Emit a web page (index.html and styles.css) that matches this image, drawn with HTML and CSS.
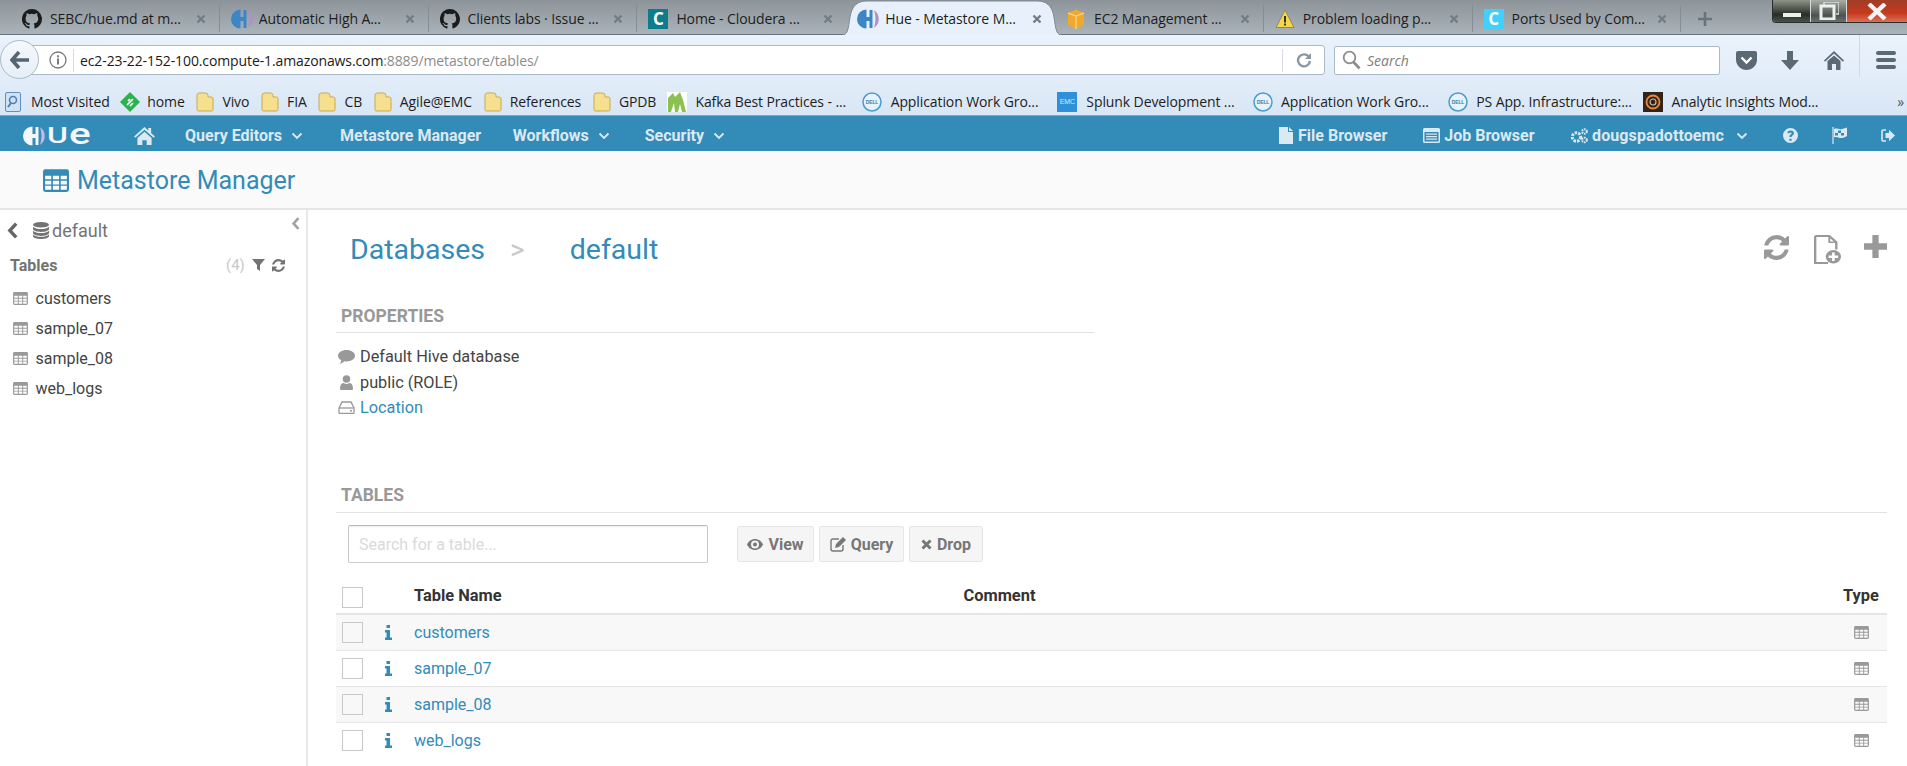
FILE: index.html
```html
<!DOCTYPE html>
<html lang="en">
<head>
<meta charset="utf-8">
<title>Hue - Metastore Manager</title>
<link rel="stylesheet" href="styles.css">
</head>
<body>
<svg class="defs" width="0" height="0" aria-hidden="true">
  <defs>
    <symbol id="i-table" viewBox="0 0 16 14"><path fill-rule="evenodd" d="M1.5 0h13A1.5 1.5 0 0 1 16 1.5v11a1.5 1.5 0 0 1-1.5 1.5h-13A1.5 1.5 0 0 1 0 12.5v-11A1.5 1.5 0 0 1 1.5 0zM1.3 4v2.3h3.8V4zM6.1 4v2.3h3.8V4zM10.9 4v2.3h3.8V4zM1.3 7.2v2.2h3.8V7.2zM6.1 7.2v2.2h3.8V7.2zM10.9 7.2v2.2h3.8V7.2zM1.3 10.3v2.4h3.8v-2.4zM6.1 10.3v2.4h3.8v-2.4zM10.9 10.3v2.4h3.8v-2.4z"/></symbol>
    <symbol id="i-refresh" viewBox="0 0 1536 1536"><path d="M1511 928q0 5-1 7-64 268-268 434.5t-478 166.5q-146 0-282.5-55t-243.5-157l-129 129q-19 19-45 19t-45-19-19-45v-448q0-26 19-45t45-19h448q26 0 45 19t19 45-19 45l-137 137q71 66 161 102t187 36q134 0 250-65t186-179q11-17 53-117 8-23 30-23h192q13 0 22.5 9.5t9.5 22.5zm25-800v448q0 26-19 45t-45 19h-448q-26 0-45-19t-19-45 19-45l138-138q-148-137-349-137-134 0-250 65t-186 179q-11 17-53 117-8 23-30 23h-199q-13 0-22.5-9.5t-9.5-22.5v-7q65-268 270-434.5t480-166.5q146 0 284 55.5t245 156.5l130-129q19-19 45-19t45 19 19 45z"/></symbol>
    <symbol id="i-chev" viewBox="0 0 12 8"><path d="M1.5 1.5L6 6l4.500-4.500" fill="none" stroke="currentColor" stroke-width="1.800"/></symbol>
    <symbol id="i-left" viewBox="0 0 11 16"><path d="M8.500 1.500L2.500 8l6 6.500" fill="none" stroke="currentColor" stroke-width="3.200"/></symbol>
    <symbol id="i-home" viewBox="0 0 22 19"><path d="M11 0l4 3.600V1h3v5.300L22 10l-1.300 1.400L11 3 1.300 11.400 0 10z"/><path d="M3.500 11.500L11 5l7.500 6.500V19h-5.200v-5H8.700v5H3.500z"/></symbol>
    <symbol id="i-hue" viewBox="0 0 22 20"><path class="hue-a" d="M9.500 0.500A9.500 9.500 0 0 0 9.500 19.500V12H12.500V19H15.500V1H12.500V8H9.500z"/><path class="hue-b" d="M17 1.300c2.900 1.400 4.800 4.800 4.800 8.700s-1.900 7.300-4.800 8.700c.9-2.500 1.400-5.500 1.400-8.700s-.5-6.200-1.400-8.700z"/></symbol>
    <symbol id="i-folder" viewBox="0 0 18 20"><path d="M1 3.500Q1 1 3.500 1h6Q12 1 12 3.500V5h3.500Q17 5 17 7v10.500q0 1.500-1.500 1.500h-13Q1 19 1 17.500z" fill="#f6e08f" stroke="#c9a94f"/></symbol>
    <symbol id="i-dell" viewBox="0 0 20 20"><circle cx="10" cy="10" r="9" fill="#e7f2fa" stroke="#4a9ccb" stroke-width="1.500"/><text x="10" y="11.800" text-anchor="middle" class="dell-text">DELL</text></symbol>
    <symbol id="i-github" viewBox="0 0 20 20"><path d="M10 0a10 10 0 0 0-3.200 19.500c.5.100.7-.2.700-.5v-1.800c-2.800.6-3.400-1.200-3.400-1.200-.4-1.100-1.100-1.500-1.100-1.500-.9-.6.100-.6.100-.6 1 .1 1.500 1 1.500 1 .9 1.500 2.300 1.100 2.900.8.100-.6.300-1.100.6-1.300-2.200-.3-4.500-1.100-4.500-4.900 0-1.100.4-2 1-2.700-.1-.3-.4-1.300.1-2.600 0 0 .8-.3 2.700 1a9.400 9.400 0 0 1 5 0c1.900-1.300 2.700-1 2.700-1 .5 1.300.2 2.300.1 2.600.6.700 1 1.600 1 2.700 0 3.800-2.300 4.600-4.500 4.900.4.300.7.900.7 1.900V19c0 .3.200.6.700.5A10 10 0 0 0 10 0z"/></symbol>
    <symbol id="i-close" viewBox="0 0 10 10"><path d="M1.500 1.500l7 7m0-7l-7 7" stroke="currentColor" stroke-width="2.400" fill="none"/></symbol>
  </defs>
</svg>

<header class="browser">
  <div class="tabbar">
    <div class="tab"><svg class="favicon fav-gh"><use href="#i-github"/></svg><span class="tab-title">SEBC/hue.md at m...</span><svg class="tab-x"><use href="#i-close"/></svg></div>
    <div class="tab"><svg class="favicon fav-hue"><use href="#i-hue"/></svg><span class="tab-title">Automatic High A...</span><svg class="tab-x"><use href="#i-close"/></svg></div>
    <div class="tab"><svg class="favicon fav-gh"><use href="#i-github"/></svg><span class="tab-title">Clients labs · Issue ...</span><svg class="tab-x"><use href="#i-close"/></svg></div>
    <div class="tab tab-noline"><span class="fav-box fav-teal">C</span><span class="tab-title">Home - Cloudera ...</span><svg class="tab-x"><use href="#i-close"/></svg></div>
    <div class="tab tab-active">
      <svg class="tab-shape" width="224" height="36" viewBox="0 0 224 36"><path d="M0 35.500C8 35.500 8 30 10 17 12 5 18 1 27 1H197c9 0 15 4 17 16 2 13 2 18.500 10 18.500z"/></svg>
      <svg class="favicon fav-hue"><use href="#i-hue"/></svg><span class="tab-title">Hue - Metastore M...</span><svg class="tab-x"><use href="#i-close"/></svg>
    </div>
    <div class="tab"><svg class="favicon" viewBox="0 0 20 20"><path d="M2 4l8-3.500L18 4v12l-8 4-8-4z" fill="#f0a92c"/><path d="M2 4l8 3 8-3M10 7v13" stroke="#fbd98f" stroke-width="1.200" fill="none"/></svg><span class="tab-title">EC2 Management ...</span><svg class="tab-x"><use href="#i-close"/></svg></div>
    <div class="tab"><svg class="favicon" viewBox="0 0 20 20"><path d="M10 1l9 17.500H1z" fill="#f5d64a" stroke="#8d8570"/><rect x="9" y="7" width="2" height="6.500" fill="#333"/><rect x="9" y="14.500" width="2" height="2" fill="#333"/></svg><span class="tab-title">Problem loading p...</span><svg class="tab-x"><use href="#i-close"/></svg></div>
    <div class="tab"><span class="fav-box fav-cyan">C</span><span class="tab-title">Ports Used by Com...</span><svg class="tab-x"><use href="#i-close"/></svg></div>
    <svg class="tab-new" viewBox="0 0 14 14"><path d="M7 0v14M0 7h14" stroke="currentColor" stroke-width="2.600"/></svg>
    <div class="winctl">
      <div class="win win-min"><span class="win-dash"></span></div>
      <div class="win win-max"><svg width="20" height="18" viewBox="0 0 20 18"><path d="M5 3V0h15v12h-3" fill="none" stroke="#d9dedd" stroke-width="1.500"/><rect x="2" y="4" width="13" height="13" fill="none" stroke="#eef0ef" stroke-width="3"/></svg></div>
      <div class="win win-close"><svg width="20" height="17" viewBox="0 0 20 17"><path d="M2 1l16 15M18 1L2 16" stroke="#f4f4f2" stroke-width="4.400"/></svg></div>
    </div>
  </div>

  <div class="toolbar">
    <div class="backbtn"><svg width="20" height="18" viewBox="0 0 20 18"><path d="M9 1L2 9l7 8M2.500 9H19" fill="none" stroke="#566572" stroke-width="3.600"/></svg></div>
    <div class="urlbar">
      <svg class="info-ic" width="18" height="18" viewBox="0 0 18 18"><circle cx="9" cy="9" r="8" fill="none" stroke="#7a7a7a" stroke-width="1.300"/><rect x="8" y="7.500" width="2" height="6" fill="#7a7a7a"/><rect x="8" y="4.300" width="2" height="2" fill="#7a7a7a"/></svg>
      <span class="url-sep"></span>
      <span class="url-text">ec2-23-22-152-100.compute-1.amazonaws.com<span class="url-dim">:8889/metastore/tables/</span></span>
      <span class="url-sep url-sep-r"></span>
      <svg class="reload" width="16" height="16" viewBox="0 0 16 16"><path d="M13 5A6 6 0 1 0 14 9" fill="none" stroke="#8a98a4" stroke-width="2.400"/><path d="M15 1v6H9z" fill="#8a98a4"/></svg>
    </div>
    <div class="searchbar">
      <svg width="19" height="20" viewBox="0 0 19 20"><circle cx="7.500" cy="7.500" r="5.800" fill="none" stroke="#8d8d8d" stroke-width="1.800"/><path d="M11.500 12l6 6.500" stroke="#8d8d8d" stroke-width="2.600"/></svg>
      <span class="search-ph">Search</span>
    </div>
    <svg class="tool tool-pocket" width="21" height="19" viewBox="0 0 21 19"><path d="M2 0h17q2 0 2 2v6.500C21 14.500 16 19 10.500 19S0 14.500 0 8.500V2q0-2 2-2z" fill="#5b6974"/><path d="M5.500 6.500l5 5 5-5" fill="none" stroke="#fff" stroke-width="2.400"/></svg>
    <svg class="tool tool-down" width="18" height="19" viewBox="0 0 18 19"><path d="M6 0h6v9h6l-9 10-9-10h6z" fill="#5b6974"/></svg>
    <svg class="tool tool-home" width="20" height="19" viewBox="0 0 20 19"><path d="M10 0l10 9.500-1 1.200L10 2.500 1 10.700 0 9.500z" fill="#5b6974"/><path d="M3.500 10L10 4.500l6.500 5.500v9H12v-6H8v6H3.500z" fill="#5b6974"/></svg>
    <span class="tool-sep"></span>
    <div class="tool-menu"><i></i><i></i><i></i></div>
  </div>

  <nav class="bookmarks">
    <a class="bm bm-first"><svg class="bm-ic" viewBox="0 0 16 20"><rect x=".5" y=".5" width="15" height="19" rx="1.500" fill="#cfe3f5" stroke="#5d8fbf"/><circle cx="8" cy="8" r="3.500" fill="none" stroke="#4d7fb3" stroke-width="1.600"/><path d="M6 11l-3 4" stroke="#4d7fb3" stroke-width="2"/></svg>Most Visited</a>
    <a class="bm"><svg class="bm-ic bm-feed" viewBox="0 0 20 20"><path d="M10 0l10 10-10 10L0 10z" fill="#2bb24c"/><path d="M7 13l6-6M8 9l2-2M10 14l3-3" stroke="#fff" stroke-width="1.700"/></svg>home</a>
    <a class="bm"><svg class="bm-ic"><use href="#i-folder"/></svg>Vivo</a>
    <a class="bm"><svg class="bm-ic"><use href="#i-folder"/></svg>FIA</a>
    <a class="bm"><svg class="bm-ic"><use href="#i-folder"/></svg>CB</a>
    <a class="bm"><svg class="bm-ic"><use href="#i-folder"/></svg>Agile@EMC</a>
    <a class="bm"><svg class="bm-ic"><use href="#i-folder"/></svg>References</a>
    <a class="bm"><svg class="bm-ic"><use href="#i-folder"/></svg>GPDB</a>
    <a class="bm bm-long"><svg class="bm-ic" viewBox="0 0 20 20"><rect width="20" height="20" fill="#fff"/><path d="M1 20V6l5-5 2 4 5-5 3 8 3 12h-4l-2-8-2 8H8l-1-9-3 9z" fill="#8cc152"/></svg>Kafka Best Practices - ...</a>
    <a class="bm bm-long"><svg class="bm-ic"><use href="#i-dell"/></svg>Application Work Gro...</a>
    <a class="bm bm-long"><span class="bm-emc">EMC</span>Splunk Development ...</a>
    <a class="bm bm-long"><svg class="bm-ic"><use href="#i-dell"/></svg>Application Work Gro...</a>
    <a class="bm bm-long"><svg class="bm-ic"><use href="#i-dell"/></svg>PS App. Infrastructure:...</a>
    <a class="bm bm-long"><svg class="bm-ic" viewBox="0 0 20 20"><rect width="20" height="20" fill="#33231a"/><circle cx="10" cy="10" r="6.500" fill="none" stroke="#e8893a" stroke-width="1.800"/><circle cx="10" cy="10" r="3" fill="none" stroke="#c9b9a0" stroke-width="1.200"/></svg>Analytic Insights Mod...</a>
    <span class="bm-more">»</span>
  </nav>
</header>

<nav class="huenav">
  <a class="logo">
    <svg class="logo-mark" viewBox="0 0 22 20"><path d="M9.500 0.500A9.500 9.500 0 0 0 9.500 19.500V12H12.500V19H15.500V1H12.500V8H9.500z" fill="#f4f7fa"/><path d="M17 1.300c2.900 1.400 4.800 4.800 4.800 8.700s-1.900 7.300-4.800 8.700c.9-2.500 1.400-5.500 1.400-8.700s-.5-6.200-1.400-8.700z" fill="#c9b8e8"/></svg>
    <span class="logo-u">U</span><span class="logo-e">e</span>
  </a>
  <svg class="nav-home"><use href="#i-home"/></svg>
  <a class="nav-item nav-query">Query Editors<svg class="nav-chev"><use href="#i-chev"/></svg></a>
  <a class="nav-item nav-meta">Metastore Manager</a>
  <a class="nav-item nav-flows">Workflows<svg class="nav-chev"><use href="#i-chev"/></svg></a>
  <a class="nav-item nav-sec">Security<svg class="nav-chev"><use href="#i-chev"/></svg></a>
  <span class="nav-spacer"></span>
  <a class="nav-item nav-file"><svg class="nav-ic" width="15" height="17" viewBox="0 0 15 17"><path d="M0 0h9v5h5v12H0zM10 0l4 4h-4z"/></svg>File Browser</a>
  <a class="nav-item nav-job"><svg class="nav-ic" width="17" height="15" viewBox="0 0 17 15"><path fill-rule="evenodd" d="M1.500 0h14A1.500 1.500 0 0 1 17 1.500v12a1.500 1.500 0 0 1-1.500 1.500h-14A1.500 1.500 0 0 1 0 13.500v-12A1.500 1.500 0 0 1 1.500 0zM1.500 4v9.500h14V4zM3 5.500h11v1.300H3zM3 8h11v1.300H3zM3 10.500h11v1.300H3z"/></svg>Job Browser</a>
  <a class="nav-item nav-user"><svg class="nav-ic" width="18" height="16" viewBox="0 0 18 16"><circle cx="6.500" cy="9" r="4.200" fill="none" stroke="currentColor" stroke-width="3" stroke-dasharray="2.400 1.100"/><circle cx="14.500" cy="3.500" r="2.300" fill="none" stroke="currentColor" stroke-width="2" stroke-dasharray="1.500 .8"/><circle cx="14.500" cy="12" r="2.300" fill="none" stroke="currentColor" stroke-width="2" stroke-dasharray="1.500 .8"/></svg><span class="nav-username">dougspadottoemc</span><svg class="nav-chev"><use href="#i-chev"/></svg></a>
  <svg class="nav-tool nav-help" width="15" height="15" viewBox="0 0 15 15"><path fill-rule="evenodd" d="M7.500 0a7.500 7.500 0 1 1 0 15 7.500 7.500 0 0 1 0-15zM6.400 10.700v2h2.200v-2zM7.600 2.500C5.900 2.500 4.700 3.300 4.300 4.800l1.800.6c.2-.7.700-1 1.400-1s1.100.3 1.100.9c0 .5-.4.800-1 1.200-.7.500-1.200 1-1.200 2v.6h2.200v-.4c0-.5.300-.7.900-1.100.8-.5 1.400-1.200 1.400-2.400 0-1.700-1.300-2.700-3.100-2.700z"/></svg>
  <svg class="nav-tool nav-flag" width="15" height="17" viewBox="0 0 15 17"><path d="M1 0v17" stroke="currentColor" stroke-width="1.200"/><path fill-rule="evenodd" d="M2 2c3-1.500 5 1 8 0 2-.5 3.500-1 5-1.500V9c-1.500 1-3.500 1.700-5 2-3 .6-5-2-8-.5zM6 3.500v2.500h3V3.500zM3 6v2.400h3V6zM9 6v2.500h3V6z"/></svg>
  <svg class="nav-tool nav-out" width="14" height="13" viewBox="0 0 14 13"><path d="M5 1H2Q1 1 1 2v9q0 1 1 1h3" fill="none" stroke="currentColor" stroke-width="1.600"/><path d="M4.500 4H8V.8l6 5.700-6 5.700V9H4.500z"/></svg>
</nav>

<div class="subheader">
  <svg class="sub-ic"><use href="#i-table"/></svg>
  <span class="sub-title">Metastore Manager</span>
</div>

<div class="main">
  <aside class="sidebar">
    <svg class="collapse"><use href="#i-left"/></svg>
    <div class="db-row">
      <svg class="db-back"><use href="#i-left"/></svg>
      <svg class="db-ic" viewBox="0 0 16 17"><ellipse cx="8" cy="2.800" rx="8" ry="2.800"/><path d="M0 4.700C1.500 6.200 4.500 7 8 7s6.500-.8 8-2.300v2.400C16 8.700 12.500 10 8 10S0 8.700 0 7.100zM0 8.700C1.500 10.200 4.500 11 8 11s6.500-.8 8-2.300v2.400C16 12.700 12.500 14 8 14s-8-1.300-8-2.900zM0 12.500C1.500 14 4.500 14.800 8 14.800s6.500-.8 8-2.300v1.800C16 15.900 12.500 17 8 17s-8-1.100-8-2.700z"/></svg>
      <span class="db-name">default</span>
    </div>
    <div class="tables-head">
      <span class="tables-label">Tables</span>
      <span class="tables-count">(4)</span>
      <svg class="tables-ic" width="13" height="12" viewBox="0 0 13 12"><path d="M0 0h13L8 6v6L5 10V6z"/></svg>
      <svg class="tables-ic" width="13" height="13"><use href="#i-refresh"/></svg>
    </div>
    <ul class="side-list">
      <li class="side-row"><svg class="side-ic"><use href="#i-table"/></svg>customers</li>
      <li class="side-row"><svg class="side-ic"><use href="#i-table"/></svg>sample_07</li>
      <li class="side-row"><svg class="side-ic"><use href="#i-table"/></svg>sample_08</li>
      <li class="side-row"><svg class="side-ic"><use href="#i-table"/></svg>web_logs</li>
    </ul>
  </aside>

  <section class="content">
    <div class="crumbs">
      <a class="crumb">Databases</a>
      <span class="crumb-sep">&gt;</span>
      <a class="crumb">default</a>
      <div class="actions">
        <svg class="act-refresh"><use href="#i-refresh"/></svg>
        <svg class="act-file" width="27" height="29" viewBox="0 0 23 28" preserveAspectRatio="none"><path d="M1 1h12l6 6v7" fill="none" stroke="currentColor" stroke-width="2"/><path d="M1 1v26h11" fill="none" stroke="currentColor" stroke-width="2"/><path d="M13 1v6h6" fill="none" stroke="currentColor" stroke-width="1.500"/><circle cx="16.500" cy="21" r="6.500"/><path d="M16.500 17v8M12.500 21h8" stroke="#fff" stroke-width="2.200"/></svg>
        <svg class="act-plus" width="23" height="23" viewBox="0 0 22 22"><path d="M8 0h6v8h8v6h-8v8H8v-8H0V8h8z"/></svg>
      </div>
    </div>

    <div class="section-title section-props">PROPERTIES</div>
    <ul class="props">
      <li class="prop"><svg class="prop-ic" width="17" height="14" viewBox="0 0 17 14"><path d="M8.500 0C13.200 0 17 2.500 17 5.700s-3.800 5.700-8.500 5.700c-.8 0-1.500-.1-2.200-.2C5 12.500 3.200 13.500 1.500 14c1-1 1.500-2.200 1.700-3.800C1.200 9.100 0 7.500 0 5.700 0 2.500 3.800 0 8.500 0z"/></svg>Default Hive database</li>
      <li class="prop"><svg class="prop-ic" width="17" height="15" viewBox="0 0 17 15"><circle cx="8.500" cy="4" r="3.800"/><path d="M3 15q-1 0-1-1.500C2 10 3.500 8 5.500 8q3 2 6 0c2 0 3.500 2 3.500 5.500q0 1.500-1 1.500z"/></svg>public (ROLE)</li>
      <li class="prop prop-link"><svg class="prop-ic" width="17" height="13" viewBox="0 0 17 13"><path d="M1 7L4 1h9l3 6v4.500q0 1-1 1H2q-1 0-1-1z" fill="none" stroke="currentColor" stroke-width="1.300"/><path d="M1 7h15" stroke="currentColor" stroke-width="1.300"/><rect x="12" y="9" width="2" height="1.500"/></svg>Location</li>
    </ul>

    <div class="section-title section-tables">TABLES</div>
    <div class="table-tools">
      <input class="table-search" type="text" placeholder="Search for a table...">
      <div class="btn-group">
        <button class="btn btn-view"><svg width="16" height="11" viewBox="0 0 16 11"><path fill-rule="evenodd" d="M8 0c3.500 0 6.500 2.300 8 5.500-1.500 3.200-4.500 5.500-8 5.500S1.500 8.700 0 5.500C1.500 2.300 4.500 0 8 0zM8 1.500a4 4 0 1 0 0 8 4 4 0 0 0 0-8zM8 3.500a2 2 0 1 1 0 4 2 2 0 0 1 0-4z"/></svg>View</button>
        <button class="btn btn-query"><svg width="16" height="15" viewBox="0 0 16 15"><path d="M9 2H3Q1 2 1 4v8q0 2 2 2h8q2 0 2-2V8" fill="none" stroke="currentColor" stroke-width="1.400"/><path d="M13 0l3 3-7 7-4 1 1-4z"/></svg>Query</button>
        <button class="btn btn-drop"><svg width="11" height="11" viewBox="0 0 11 11"><path d="M1.500 1.500l8 8m0-8l-8 8" stroke="currentColor" stroke-width="3" fill="none"/></svg>Drop</button>
      </div>
    </div>

    <table class="tbl">
      <colgroup><col class="col-check"><col class="col-info"><col class="col-name"><col class="col-comment"><col class="col-type"></colgroup>
      <thead>
        <tr><th class="cell-check"><span class="check check-head"></span></th><th></th><th>Table Name</th><th>Comment</th><th>Type</th></tr>
      </thead>
      <tbody>
        <tr class="row-odd"><td class="cell-check"><span class="check"></span></td><td class="cell-info"><svg class="i-info" width="7" height="15" viewBox="0 0 7 15"><path d="M1.500 0h3.500v3H1.500zM0 5h5v7.500h2V15H0v-2.500h1.500V7.500H0z"/></svg></td><td><a class="tlink">customers</a></td><td></td><td class="cell-type"><svg class="type-ic"><use href="#i-table"/></svg></td></tr>
        <tr><td class="cell-check"><span class="check"></span></td><td class="cell-info"><svg class="i-info" width="7" height="15" viewBox="0 0 7 15"><path d="M1.500 0h3.500v3H1.500zM0 5h5v7.500h2V15H0v-2.500h1.500V7.500H0z"/></svg></td><td><a class="tlink">sample_07</a></td><td></td><td class="cell-type"><svg class="type-ic"><use href="#i-table"/></svg></td></tr>
        <tr class="row-odd"><td class="cell-check"><span class="check"></span></td><td class="cell-info"><svg class="i-info" width="7" height="15" viewBox="0 0 7 15"><path d="M1.500 0h3.500v3H1.500zM0 5h5v7.500h2V15H0v-2.500h1.500V7.500H0z"/></svg></td><td><a class="tlink">sample_08</a></td><td></td><td class="cell-type"><svg class="type-ic"><use href="#i-table"/></svg></td></tr>
        <tr class="row-last"><td class="cell-check"><span class="check"></span></td><td class="cell-info"><svg class="i-info" width="7" height="15" viewBox="0 0 7 15"><path d="M1.500 0h3.500v3H1.500zM0 5h5v7.500h2V15H0v-2.500h1.500V7.500H0z"/></svg></td><td><a class="tlink">web_logs</a></td><td></td><td class="cell-type"><svg class="type-ic"><use href="#i-table"/></svg></td></tr>
      </tbody>
    </table>
  </section>
</div>
</body>
</html>
```

FILE: styles.css
```css
* { box-sizing: border-box; }
html, body { margin: 0; height: 100%; }
body {
  display: flex;
  flex-direction: column;
  height: 766px;
  overflow: hidden;
  font-family: Roboto, "Liberation Sans", sans-serif;
  font-size: 16px;
  color: #444;
  background: #fff;
}
.defs { position: absolute; }
ul { list-style: none; margin: 0; padding: 0; }
svg { display: block; fill: currentColor; flex: none; }

/* browser chrome */
.browser { font-family: "Open Sans", "Liberation Sans", sans-serif; flex: none; }
.tabbar {
  display: flex;
  align-items: center;
  height: 35px;
  padding: 3px 0 0 11px;
  background: linear-gradient(#8d9499, #aab3ba);
  border-bottom: 1px solid #69747e;
  position: relative;
}
.tab {
  position: relative;
  display: flex;
  align-items: center;
  flex: none;
  width: 208.8px;
  height: 27px;
  padding-left: 11px;
  border-right: 1px solid #848e96;
  font-size: 14px;
  color: #1d1d1d;
}
.tab-noline { border-right: 0; }
.tab-active { border-right: 0; }
.tab-shape {
  position: absolute;
  left: -6px;
  top: -5px;
}
.tab-shape path { fill: #e8f1fb; stroke: #7b8995; }
.tab-active > .favicon, .tab-active > .tab-title, .tab-active > .tab-x { position: relative; }
.favicon { width: 20px; height: 20px; margin-right: 8px; color: #222; }
.fav-gh { color: #1b1b1b; }
.fav-hue { width: 22px; margin-right: 6px; }
.hue-a { fill: #3d86c6; }
.hue-b { fill: #b18fc9; }
.dell-text { font: 700 5px "Liberation Sans", sans-serif; fill: #3d7fa8; }
.fav-box {
  width: 20px;
  height: 20px;
  margin-right: 8px;
  flex: none;
  font: 700 17px/20px "Open Sans", sans-serif;
  text-align: center;
  color: #fff;
}
.fav-teal { background: #0f7c8a; }
.fav-cyan { background: #3fd0fb; }
.tab-title { flex: 1; white-space: nowrap; overflow: hidden; letter-spacing: -0.1px; }
.tab-x { width: 10px; height: 10px; margin-right: 13px; color: #737d85; }
.tab-new { width: 14px; height: 14px; margin-left: 17px; color: #68737c; }
.winctl {
  display: flex;
  position: absolute;
  right: 0;
  top: 0;
  width: 135px;
  height: 23px;
  border: 1px solid #2a2f2e;
  border-top: 0;
  border-right: 0;
  border-radius: 0 0 0 4px;
  overflow: hidden;
}
.win { display: flex; justify-content: center; align-items: center; border-right: 1px solid #d7dbd9; }
.win-min { width: 38px; background: linear-gradient(#8e9488, #2a2e29 65%, #4a504b); align-items: flex-end; padding-bottom: 5px; }
.win-dash { width: 18px; height: 4px; background: #eef0ef; }
.win-max { width: 36px; background: linear-gradient(#a9aca4, #4d524f 70%, #6a706d); }
.win-close { flex: 1; border-right: 0; background: linear-gradient(#a03d28, #c8391c 60%, #d8705a); }

.toolbar {
  display: flex;
  align-items: center;
  height: 42px;
  background: linear-gradient(#eaf3fc, #e3edf9);
  position: relative;
}
.backbtn {
  position: relative;
  z-index: 1;
  display: flex;
  align-items: center;
  justify-content: center;
  flex: none;
  width: 39px;
  height: 39px;
  margin-top: 7px;
  border: 1px solid #a9bac9;
  border-radius: 50%;
  background: linear-gradient(#f6f9fd, #e7eef6);
}
.urlbar {
  display: flex;
  align-items: center;
  flex: none;
  width: 1299px;
  height: 30px;
  margin: 8px 0 0 -13px;
  padding-left: 22px;
  background: #fff;
  border: 1px solid #a9bac9;
  border-radius: 0 3px 3px 0;
}
.info-ic { margin-right: 6px; }
.url-sep { width: 1px; height: 23px; background: #d5dbe1; flex: none; }
.url-text {
  margin-left: 6px;
  font-family: "Open Sans", "Liberation Sans", sans-serif;
  font-size: 14px;
  letter-spacing: -0.11px;
  color: #1a1a1a;
  white-space: nowrap;
}
.url-dim { color: #8c8c8c; }
.url-sep-r { margin-left: auto; }
.reload { margin: 0 12px 0 13px; }
.searchbar {
  display: flex;
  align-items: center;
  flex: none;
  width: 386px;
  height: 29px;
  margin: 8px 0 0 9px;
  padding-left: 7px;
  background: #fff;
  border: 1px solid #a9bac9;
  border-radius: 2px;
}
.search-ph { margin-left: 6px; font-style: italic; font-size: 14px; color: #7d7d7d; }
.tool { margin-top: 8px; }
.tool-pocket { margin-left: 16px; }
.tool-down { margin-left: 24px; }
.tool-home { margin-left: 25px; }
.tool-sep { width: 1px; height: 42px; margin-left: 15px; background: #cfd9e3; }
.tool-menu { display: flex; flex-direction: column; gap: 3px; margin: 8px 0 0 16px; }
.tool-menu i { display: block; width: 20px; height: 4px; border-radius: 2px; background: #5b6974; }

.bookmarks {
  display: flex;
  align-items: center;
  height: 39px;
  padding: 11px 0 0 5px;
  background: linear-gradient(#e3edf9, #d8e6f5);
  border-bottom: 1px solid #8aa3b8;
  font-size: 14px;
  color: #1d1d1d;
  white-space: nowrap;
  letter-spacing: -0.1px;
}
.bm { display: flex; align-items: center; margin-right: 10.7px; }
.bm-ic { width: 20px; height: 20px; margin-right: 7px; }
.bm-first .bm-ic { width: 16px; margin-right: 10px; }
.bm-long { flex: none; width: 195.2px; margin-right: 0; overflow: hidden; }
.bm-long .bm-ic { margin-right: 8.5px; }
.bm-emc { width: 20px; height: 20px; margin-right: 9px; flex: none; background: #2f8fd8; color: #dcecf9; font: 7px/20px "Liberation Sans", sans-serif; text-align: center; }
.bm-more { margin-left: auto; margin-right: 3px; font-size: 14px; color: #555; }

/* hue nav */
.huenav {
  display: flex;
  align-items: center;
  flex: none;
  height: 35px;
  padding: 4px 0 0 22px;
  background: #338bb8;
  color: #dbe9f2;
  font-size: 16px;
  font-weight: 700;
}
.logo { display: flex; align-items: center; flex: none; color: #f4f7fa; width: 112px; }
.logo-mark { width: 24px; height: 20px; margin-right: 1px; }
.logo-u { font: 500 22px/20px Roboto, sans-serif; transform: scaleX(1.45); transform-origin: left; width: 22px; }
.logo-e { font: 500 30px/20px Roboto, sans-serif; transform: scaleX(1.35); transform-origin: left; margin-top: -4px; }
.nav-home { width: 21px; height: 18px; color: #dbe9f2; margin-right: 30px; }
.nav-item { display: flex; align-items: center; white-space: nowrap; }
.nav-chev { width: 12px; height: 8px; margin-left: 9px; }
.nav-query { margin-right: 37px; }
.nav-meta { margin-right: 31.5px; }
.nav-flows { margin-right: 35px; }
.nav-spacer { flex: 1; }
.nav-ic { margin-right: 4px; }
.nav-file { margin-right: 36px; }
.nav-job { margin-right: 35.5px; }
.nav-username { letter-spacing: 0.1px; }
.nav-user .nav-chev { margin-left: 12px; }
.nav-help { margin-left: 35px; }
.nav-flag { margin-left: 34px; }
.nav-out { margin: 0 12px 0 34px; }

/* sub header */
.subheader {
  display: flex;
  align-items: center;
  flex: none;
  height: 59px;
  padding: 2px 0 0 43px;
  background: #fafafa;
  border-bottom: 2px solid #e5e5e5;
}
.sub-ic { width: 26px; height: 23px; margin-right: 8px; color: #338bb8; }
.sub-title { font-size: 25px; color: #338bb8; }

/* layout */
.main { display: flex; flex: 1; min-height: 0; }
.sidebar {
  position: relative;
  flex: none;
  width: 308px;
  border-right: 2px solid #e8e8e8;
}
.collapse { position: absolute; left: 291px; top: 7px; width: 10px; height: 13px; color: #a3a3a3; }
.db-row { display: flex; align-items: center; height: 41px; margin-bottom: 1px; padding-left: 7px; }
.db-back { width: 12px; height: 17px; color: #666; margin-right: 14px; }
.db-ic { width: 16px; height: 17px; color: #737373; margin-right: 3px; }
.db-name { font-size: 18px; color: #737373; }
.tables-head { display: flex; align-items: center; height: 26px; padding-left: 10px; }
.tables-label { font-size: 16px; font-weight: 700; color: #737373; width: 216px; }
.tables-count { font-size: 15px; color: #c9c9c9; width: 26px; }
.tables-ic { color: #737373; margin-right: 7px; }
.side-list { margin-top: 5px; }
.side-row { display: flex; align-items: center; height: 30px; padding-left: 13px; font-size: 16px; color: #444; }
.side-ic { width: 15px; height: 13px; margin-right: 7.5px; color: #999; }

.content { flex: 1; min-width: 0; padding: 0 20px 0 28px; }
.crumbs { display: flex; align-items: center; height: 78px; padding-left: 14px; }
.crumb { font-size: 28.5px; color: #338bb8; }
.crumb-sep { font-size: 28px; color: #c9c9c9; margin: 0 45px 0 25px; }
.actions { display: flex; align-items: flex-start; margin-left: auto; color: #999; }
.act-refresh { width: 25px; height: 25px; margin-right: 25px; }
.act-file { margin-right: 23px; }
.act-plus { margin-right: 0; }

.section-title {
  height: 29px;
  padding: 1px 0 6px 5px;
  font-size: 17.5px;
  line-height: 22px;
  font-weight: 700;
  color: #999;
  border-bottom: 1px solid #e2e2e2;
}
.section-props { margin-top: 16px; width: 758px; }
.section-tables { margin-top: 63.5px; padding-top: 0; }
.props { margin-top: 11px; }
.prop { display: flex; align-items: center; height: 25.5px; font-size: 16.3px; color: #444; padding-left: 2px; }
.prop-ic { margin-right: 5px; color: #999; width: 17px; }
.prop-link { color: #338bb8; }
.prop-link .prop-ic { color: #999; }

.table-tools { display: flex; align-items: center; margin: 12px 0 1px 12px; }
.table-search {
  width: 360px;
  height: 38px;
  padding: 0 10px;
  font: 16px Roboto, sans-serif;
  border: 1px solid #ccc;
  border-top-color: #bbb;
  border-radius: 2px;
  box-shadow: inset 0 1px 2px rgba(0,0,0,.07);
  outline: 0;
}
.table-search::placeholder { color: #dadada; }
.btn-group { display: flex; margin-left: 29px; gap: 5px; }
.btn {
  display: flex;
  align-items: center;
  justify-content: center;
  gap: 5px;
  height: 36px;
  padding: 0;
  font: 700 16px Roboto, sans-serif;
  color: #777;
  background: #f5f5f5;
  border: 1px solid #e6e6e6;
  border-radius: 2px;
}
.btn-view { width: 77px; }
.btn-query { width: 85px; }
.btn-drop { width: 74px; }

.tbl { width: 100%; border-collapse: collapse; table-layout: fixed; }
.col-check { width: 36px; }
.col-info { width: 42px; }
.col-name { width: 549.5px; }
.col-type { width: 44px; }
.tbl th {
  height: 50px;
  padding: 14px 0 0;
  text-align: left;
  font-size: 16.4px;
  font-weight: 700;
  color: #333;
  border-bottom: 2px solid #e5e5e5;
}
.tbl td { height: 36px; padding: 0; border-bottom: 1px solid #e5e5e5; }
.row-odd td { background: #f8f8f8; }
.row-last td { border-bottom: 0; }
.cell-check { padding-left: 6px !important; }
.check { display: block; width: 21px; height: 21px; border: 1px solid #c9c9c9; background: #fff; }
.row-odd .check { background: #f8f8f8; }
.check-head { margin-top: 4px; }
.cell-info .i-info { color: #338bb8; margin-left: 13px; }
.tlink { font-size: 16px; color: #338bb8; }
.cell-type { padding-left: 11px !important; }
.type-ic { width: 15px; height: 13px; color: #999; }
```
